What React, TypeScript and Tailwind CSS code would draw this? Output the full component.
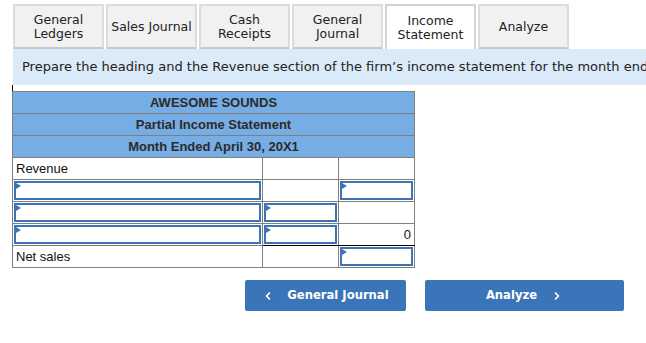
import { ChevronLeft, ChevronRight } from "lucide-react";

const tabs = [
  { label: ["General", "Ledgers"] },
  { label: ["Sales Journal"] },
  { label: ["Cash", "Receipts"] },
  { label: ["General", "Journal"] },
  { label: ["Income", "Statement"], active: true },
  { label: ["Analyze"] },
];

function Field({ marker = false }: { marker?: boolean }) {
  return (
    <div className="relative m-px h-[19px] border-2 border-[#3d74b6] bg-white">
      {marker && (
        <span className="absolute left-0 top-0 h-0 w-0 border-y-[3px] border-l-[5px] border-y-transparent border-l-[#3d74b6]" />
      )}
    </div>
  );
}

export default function App() {
  const cell = "border border-[#7f7f7f] p-0 h-[22px] align-middle";
  const head = "border border-[#7f7f7f] bg-[#76ade4] h-[22px] text-center text-[13px] font-bold text-[#2b2b2b]";

  return (
    <div className="w-[646px] h-[343px] overflow-hidden bg-white font-['Liberation_Sans',Arial,sans-serif] text-[13px]">
      <div className="flex gap-[2px] pl-[13px] pt-[4px] font-['DejaVu_Sans',Verdana,sans-serif] text-[12.5px] text-[#222]">
        {tabs.map((t, i) => (
          <div
            key={i}
            className={`flex h-[45px] w-[91px] flex-col items-center justify-center border-2 leading-[14px] ${
              t.active ? "border-[#d4d4d4] border-b-0 bg-white" : "border-[#dcdcdc] border-b-[#c8c8c8] bg-[#f1f1f1]"
            }`}
          >
            {t.label.map((l) => (
              <span key={l}>{l}</span>
            ))}
          </div>
        ))}
      </div>

      <div className="ml-[13px] h-[36px] overflow-hidden whitespace-nowrap bg-[#dbeaf8] pl-[9px] font-['DejaVu_Sans',Verdana,sans-serif] text-[13px] leading-[36px] text-[#222]">
        Prepare the heading and the Revenue section of the firm’s income statement for the month ended April 30, 20X1.
      </div>

      <div className="ml-[12px] h-[6px] w-px bg-black" />

      <table className="ml-[12px] w-[402px] border-collapse table-fixed">
        <colgroup>
          <col className="w-[250px]" />
          <col className="w-[76px]" />
          <col className="w-[76px]" />
        </colgroup>
        <tbody>
          <tr>
            <td colSpan={3} className={head}>AWESOME SOUNDS</td>
          </tr>
          <tr>
            <td colSpan={3} className={head}>Partial Income Statement</td>
          </tr>
          <tr>
            <td colSpan={3} className={head}>Month Ended April 30, 20X1</td>
          </tr>
          <tr>
            <td className={`${cell} pl-[3px] text-[#111]`}>Revenue</td>
            <td className={cell} />
            <td className={cell} />
          </tr>
          <tr>
            <td className={cell}><Field marker /></td>
            <td className={cell} />
            <td className={cell}><Field marker /></td>
          </tr>
          <tr>
            <td className={cell}><Field marker /></td>
            <td className={cell}><Field marker /></td>
            <td className={cell} />
          </tr>
          <tr>
            <td className={cell}><Field marker /></td>
            <td className={`${cell} border-b-black`}><Field marker /></td>
            <td className={`${cell} border-b-black pr-[3px] text-right text-[#111]`}>0</td>
          </tr>
          <tr>
            <td className={`${cell} pl-[3px] text-[#111]`}>Net sales</td>
            <td className={`${cell} border-t-black`} />
            <td className={`${cell} border-t-black`}><Field marker /></td>
          </tr>
        </tbody>
      </table>

      <div className="ml-[245px] mt-[12px] flex gap-[19px] font-['DejaVu_Sans',Verdana,sans-serif] text-[11.6px] font-bold text-white">
        <button className="flex h-[31px] w-[161px] items-center justify-center gap-[13px] rounded-[2px] bg-[#3a75b9]">
          <ChevronLeft size={12} strokeWidth={3.5} />
          <span>General Journal</span>
        </button>
        <button className="flex h-[31px] w-[199px] items-center justify-center gap-[14px] rounded-[2px] bg-[#3a75b9]">
          <span>Analyze</span>
          <ChevronRight size={12} strokeWidth={3.5} />
        </button>
      </div>
    </div>
  );
}
